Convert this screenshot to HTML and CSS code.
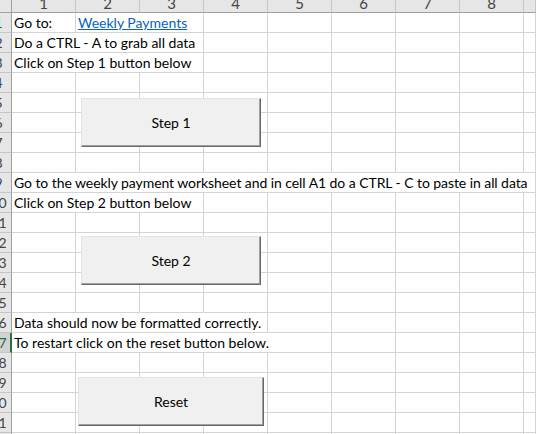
FILE: index.html
```html
<!DOCTYPE html>
<html>
<head>
<meta charset="utf-8">
<link rel="stylesheet" href="styles.css">
</head>
<body>
<div class="sheet">
  <div class="grid">
    <div class="ch corner"></div>
    <div class="ch"><span>1</span></div>
    <div class="ch"><span>2</span></div>
    <div class="ch"><span>3</span></div>
    <div class="ch"><span>4</span></div>
    <div class="ch"><span>5</span></div>
    <div class="ch"><span>6</span></div>
    <div class="ch"><span>7</span></div>
    <div class="ch"><span>8</span></div>
    <div class="ch"></div>

    <div class="rh"><span>1</span></div>
    <div class="c t">Go to:</div>
    <div class="c t s2"><a class="link" href="#">Weekly Payments</a></div>
    <div class="c"></div><div class="c"></div><div class="c"></div><div class="c"></div><div class="c"></div><div class="c"></div>

    <div class="rh"><span>2</span></div>
    <div class="c t s3">Do a CTRL - A to grab all data</div>
    <div class="c"></div><div class="c"></div><div class="c"></div><div class="c"></div><div class="c"></div><div class="c"></div>

    <div class="rh"><span>3</span></div>
    <div class="c t s3">Click on Step 1 button below</div>
    <div class="c"></div><div class="c"></div><div class="c"></div><div class="c"></div><div class="c"></div><div class="c"></div>

    <div class="rh"><span>4</span></div>
    <div class="c"></div><div class="c"></div><div class="c"></div><div class="c"></div><div class="c"></div><div class="c"></div><div class="c"></div><div class="c"></div><div class="c"></div>
    <div class="rh"><span>5</span></div>
    <div class="c"></div><div class="c"></div><div class="c"></div><div class="c"></div><div class="c"></div><div class="c"></div><div class="c"></div><div class="c"></div><div class="c"></div>
    <div class="rh"><span>6</span></div>
    <div class="c"></div><div class="c"></div><div class="c"></div><div class="c"></div><div class="c"></div><div class="c"></div><div class="c"></div><div class="c"></div><div class="c"></div>
    <div class="rh"><span>7</span></div>
    <div class="c"></div><div class="c"></div><div class="c"></div><div class="c"></div><div class="c"></div><div class="c"></div><div class="c"></div><div class="c"></div><div class="c"></div>
    <div class="rh"><span>8</span></div>
    <div class="c"></div><div class="c"></div><div class="c"></div><div class="c"></div><div class="c"></div><div class="c"></div><div class="c"></div><div class="c"></div><div class="c"></div>

    <div class="rh"><span>9</span></div>
    <div class="c t sall tight">Go to the weekly payment worksheet and in cell A1 do a CTRL - C to paste in all data</div>

    <div class="rh"><span>10</span></div>
    <div class="c t s3">Click on Step 2 button below</div>
    <div class="c"></div><div class="c"></div><div class="c"></div><div class="c"></div><div class="c"></div><div class="c"></div>

    <div class="rh"><span>11</span></div>
    <div class="c"></div><div class="c"></div><div class="c"></div><div class="c"></div><div class="c"></div><div class="c"></div><div class="c"></div><div class="c"></div><div class="c"></div>
    <div class="rh"><span>12</span></div>
    <div class="c"></div><div class="c"></div><div class="c"></div><div class="c"></div><div class="c"></div><div class="c"></div><div class="c"></div><div class="c"></div><div class="c"></div>
    <div class="rh"><span>13</span></div>
    <div class="c"></div><div class="c"></div><div class="c"></div><div class="c"></div><div class="c"></div><div class="c"></div><div class="c"></div><div class="c"></div><div class="c"></div>
    <div class="rh"><span>14</span></div>
    <div class="c"></div><div class="c"></div><div class="c"></div><div class="c"></div><div class="c"></div><div class="c"></div><div class="c"></div><div class="c"></div><div class="c"></div>
    <div class="rh"><span>15</span></div>
    <div class="c"></div><div class="c"></div><div class="c"></div><div class="c"></div><div class="c"></div><div class="c"></div><div class="c"></div><div class="c"></div><div class="c"></div>

    <div class="rh"><span>16</span></div>
    <div class="c t s4">Data should now be formatted correctly.</div>
    <div class="c"></div><div class="c"></div><div class="c"></div><div class="c"></div><div class="c"></div>

    <div class="rh sel"><span>17</span></div>
    <div class="c t s5">To restart click on the reset button below.</div>
    <div class="c"></div><div class="c"></div><div class="c"></div><div class="c"></div>

    <div class="rh"><span>18</span></div>
    <div class="c"></div><div class="c"></div><div class="c"></div><div class="c"></div><div class="c"></div><div class="c"></div><div class="c"></div><div class="c"></div><div class="c"></div>
    <div class="rh"><span>19</span></div>
    <div class="c"></div><div class="c"></div><div class="c"></div><div class="c"></div><div class="c"></div><div class="c"></div><div class="c"></div><div class="c"></div><div class="c"></div>
    <div class="rh"><span>20</span></div>
    <div class="c"></div><div class="c"></div><div class="c"></div><div class="c"></div><div class="c"></div><div class="c"></div><div class="c"></div><div class="c"></div><div class="c"></div>
    <div class="rh"><span>21</span></div>
    <div class="c"></div><div class="c"></div><div class="c"></div><div class="c"></div><div class="c"></div><div class="c"></div><div class="c"></div><div class="c"></div><div class="c"></div>
    <div class="rh"><span>22</span></div>
    <div class="c"></div><div class="c"></div><div class="c"></div><div class="c"></div><div class="c"></div><div class="c"></div><div class="c"></div><div class="c"></div><div class="c"></div>
  </div>

  <div class="btn btn-step1">Step 1</div>
  <div class="btn btn-step2">Step 2</div>
  <div class="btn btn-reset">Reset</div>
</div>
</body>
</html>
```

FILE: styles.css
```css
html, body {
  margin: 0;
  padding: 0;
  background: #ffffff;
  overflow: hidden;
}

.sheet {
  position: relative;
  width: 536px;
  height: 434px;
  overflow: hidden;
  font-family: Lato, "Liberation Sans", sans-serif;
  font-size: 14px;
  color: #000000;
}

.grid {
  display: grid;
  grid-template-columns: 12px repeat(8, 64px) 1fr;
  grid-template-rows: 13px;
  grid-auto-rows: 20px;
}

.grid > div {
  box-sizing: border-box;
  overflow: hidden;
  white-space: nowrap;
}

.ch {
  background: #e6e6e6;
  border-right: 1px solid #c6c6c6;
  border-bottom: 1px solid #9f9f9f;
  display: flex;
  justify-content: center;
  align-items: flex-end;
  color: #444444;
  font-size: 15px;
}

.ch span {
  line-height: 15px;
  margin-bottom: 1px;
}

.ch.corner {
  border-right: 1px solid #9f9f9f;
}

.rh {
  background: #e6e6e6;
  border-right: 1px solid #9f9f9f;
  border-bottom: 1px solid #c6c6c6;
  color: #444444;
  font-size: 14px;
  line-height: 19px;
}

.rh span {
  display: block;
  width: 25px;
  margin-left: -14px;
  text-align: center;
}

.rh.sel {
  background: #d2d2d2;
  color: #217346;
  border-right: 2px solid #217346;
}

.c {
  border-right: 1px solid #d4d4d4;
  border-bottom: 1px solid #d4d4d4;
  background: #ffffff;
}

.t {
  padding-left: 2px;
  line-height: 19px;
}

.tight {
  letter-spacing: -0.07px;
}

.s2 { grid-column: span 2; }
.s3 { grid-column: span 3; }
.s4 { grid-column: span 4; }
.s5 { grid-column: span 5; }
.sall { grid-column: 2 / -1; }

.link {
  color: #0563c1;
  text-decoration: underline;
}

.btn {
  position: absolute;
  box-sizing: border-box;
  display: flex;
  align-items: center;
  justify-content: center;
  background: #f0f0f0;
  border-top: 1px solid #e3e3e3;
  border-left: 1px solid #e3e3e3;
  border-right: 1px solid #696969;
  border-bottom: 1px solid #696969;
  box-shadow: inset -1px -1px 0 #a0a0a0;
  font-family: Lato, "Liberation Sans", sans-serif;
  font-size: 14px;
  color: #000000;
}

.btn-step1 { left: 81px; top: 98px; width: 180px; height: 49px; }
.btn-step2 { left: 81px; top: 236px; width: 180px; height: 49px; }
.btn-reset { left: 78px; top: 377px; width: 186px; height: 49px; }
```
